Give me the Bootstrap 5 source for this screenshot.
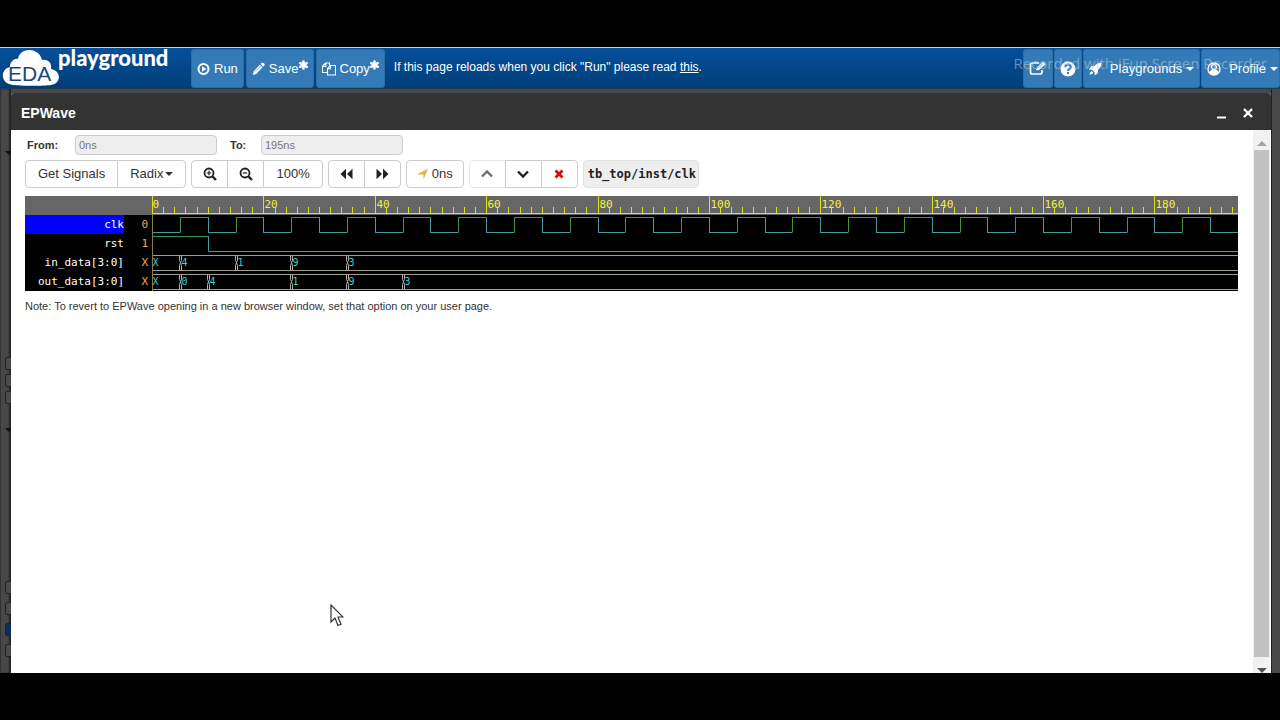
<!DOCTYPE html>
<html lang="en">
<head>
<meta charset="utf-8">
<meta name="viewport" content="width=device-width, initial-scale=1">
<title>EPWave - EDA Playground</title>
<link href="https://cdn.jsdelivr.net/npm/bootstrap@5.3.0/dist/css/bootstrap.min.css" rel="stylesheet">
<style>
body{background:#000;font-family:"Liberation Sans",Arial,sans-serif;font-size:13px;line-height:18px;color:#333}
.screen{height:100vh;min-height:400px;padding:47px 0;overflow:hidden}
.stage{background:#484848;min-height:0}
svg{display:block;flex:none}
.topbar{height:42px;padding:1px 0 0 2px;border-top:1px solid #b9d3ea;border-bottom:1px solid #1c3f5a;background:linear-gradient(#05509b,#003e78);color:#fff;white-space:nowrap;flex:none}
.brand{color:#fff;text-decoration:none;width:189px}
.brand-name{font:900 22px/18px Lato,sans-serif;margin-left:-2px}
.message{font-size:12px;line-height:36px;padding-left:9px}
.btn{--bs-btn-font-size:13px;--bs-btn-line-height:18px;--bs-btn-padding-y:0px;--bs-btn-border-radius:4px;display:inline-flex;align-items:center;justify-content:center;gap:4px}
.nav-btn{--bs-btn-color:#fff;--bs-btn-bg:#337ab7;--bs-btn-border-color:#2e6da4;--bs-btn-hover-bg:#286090;--bs-btn-hover-color:#fff;--bs-btn-padding-x:5px;height:39px;border-radius:3px}
.caret{border:4px solid transparent;border-top-color:currentColor;border-bottom:0}
.watermark{position:absolute;right:13px;top:52px;font:15px/22px "Open Sans",sans-serif;color:rgba(190,205,220,.55);pointer-events:none;z-index:3;white-space:nowrap}
.gutter{width:11px;flex:none;overflow:hidden;padding:62px 0 0 4px;border-left:1px solid #333;box-shadow:inset -2px 0 2px #222}
.gutter input{appearance:none;display:block;width:13px;height:13px;margin:0 0 4px;border:1px solid #222;border-radius:2px;background:#4b4b4b}
.gutter input:checked{background:#0b2f5f}
.gutter .fold{width:0;border:4px solid transparent;border-top-color:#111;border-bottom:0}
.gutter-end{width:9px;flex:none;border-left:1px solid #222}
.dialog-box{min-width:0;margin-top:4px;background:#fff;border-radius:4px 4px 0 0}
.dialog-head{height:37px;padding:2px 14px 0 10px;background:#333;color:#fff;border-radius:4px 4px 0 0;flex:none}
.dialog-head h1{font-size:14px;line-height:18px;font-weight:700}
.head-btn{border:0;background:none;color:#fff;padding:3px;display:flex}
.pane{min-width:0;padding:5px 15px 0 14px}
.range-label{font-size:11px;font-weight:700}
.range-box{width:142px;height:20px;min-height:20px;padding:0 3px;font-size:11px;line-height:18px;border:1px solid #ccc;border-radius:4px;background:#eee;color:#777}
.range-box:disabled{background:#eee}
.tool{--bs-btn-color:#333;--bs-btn-bg:#fff;--bs-btn-border-color:#ccc;--bs-btn-padding-x:12px;--bs-btn-hover-bg:#e6e6e6;--bs-btn-hover-color:#333;--bs-btn-hover-border-color:#adadad;height:28px}
.tool-icon{--bs-btn-padding-x:0px;width:37px;flex:none!important}
.tool:disabled{--bs-btn-disabled-color:#333;--bs-btn-disabled-border-color:#ddd;--bs-btn-disabled-bg:#fff}
.path-name{height:28px;line-height:26px;padding:0 2px 0 4px;background:#eee;border:1px solid #e3e3e3;border-radius:4px;color:#222;font-family:"DejaVu Sans Mono",monospace;font-size:12px;font-weight:700}
.wave{background:#000;color:#fff;margin-top:8px;font-family:"DejaVu Sans Mono",monospace;font-size:11px;line-height:19px;overflow:hidden}
.names{width:127px;flex:none}
.names-head{height:19px;background:#666}
.sig{height:19px}
.sig-name{width:99px;text-align:right}
.sig-value{width:24px;text-align:right;color:#f4a64c}
.chosen{background:#00f}
#plot{height:95px;min-width:0}
#plot text{font-family:"DejaVu Sans Mono",monospace;font-size:11px}
#plot .bus-text{font-size:10px;fill:#3cd0d0}
.note-text{font-size:11px;line-height:16px;margin:7px 0 0}
.scroll{width:18px;flex:none;background:#f1f1f1;padding:0 1px;border-right:1px solid #fff}
.scroll-end{height:16px;flex:none}
.scroll-end i{border:5px solid transparent}
.thumb{background:#c1c1c1}
.pointer{position:absolute;left:330px;top:604px;z-index:4}
</style>
</head>
<body>
<div class="screen d-flex flex-column position-relative">
  <nav class="topbar d-flex align-items-start">
    <a class="brand d-flex" href="#" aria-label="EDA playground">
      <svg width="58" height="37" viewBox="0 0 58 37"><path fill="#fff" d="M11 36C-2 35-2 20 8 18 8 12 13 9 16 10 18-2 37-2 40 11c6-1 10 3 9 9 11 2 10 15 0 16-6 1-31 1-38 0Z"/><text x="6" y="32" font-family="Liberation Sans" font-size="21" fill="#1d4775">EDA</text></svg>
      <span class="brand-name">playground</span>
    </a>
    <div class="d-flex" style="gap:2px">
      <button class="btn nav-btn" type="button"><svg width="13" height="14" viewBox="0 0 13 14"><circle cx="6.500" cy="7" r="5" fill="none" stroke="#fff" stroke-width="2"/><path d="M5 4.300v5.400L9.500 7Z" fill="#fff"/></svg>Run</button>
      <button class="btn nav-btn" type="button"><svg width="13" height="14" viewBox="0 0 13 14"><path fill="#fff" d="M8.500 2 10 .8q1-.5 2 .5t.6 2L11.300 4.800ZM7.700 2.800l2.800 2.800-6.300 6.300L.8 13l.9-3.800Z"/><path d="m3 9.600 5.500-5.500" stroke="#337ab7" stroke-width=".6"/></svg><span class="d-flex">Save<svg width="9" height="10" viewBox="-5 -5 10 10"><path d="M0-4v8M-3.600-2l7.200 4M-3.600 2l7.200-4" stroke="#fff" stroke-width="2.800" stroke-linecap="round"/></svg></span></button>
      <button class="btn nav-btn" type="button"><svg width="14" height="14" viewBox="0 0 14 14" fill="none" stroke="#fff" stroke-width="1.100"><path d="M5.500 10.500h-5V4L3.500 1h4v2.500M.5 4.500h3.300V1M8.500 3.500h5v9.500h-8V6.500ZM8.500 3.500v3.300h-3"/></svg><span class="d-flex">Copy<svg width="9" height="10" viewBox="-5 -5 10 10"><path d="M0-4v8M-3.600-2l7.200 4M-3.600 2l7.200-4" stroke="#fff" stroke-width="2.800" stroke-linecap="round"/></svg></span></button>
    </div>
    <span class="message">If this page reloads when you click "Run" please read <a href="#" class="text-white">this</a>.</span>
    <div class="d-flex ms-auto" style="gap:1px">
      <button class="btn nav-btn" type="button" aria-label="Edit"><svg width="18" height="15" viewBox="0 0 18 15" fill="none" stroke="#fff"><path d="M10 2H3.500Q1.500 2 1.500 4v7q0 2 2 2h7.500q2 0 2-2V9" stroke-width="1.700"/><path d="m7 9.500 1-3L14 .8l2.500 2.400L10 9Z" fill="#fff" stroke="none"/><path d="m8.500 7.500 5.500-5" stroke="#337ab7" stroke-width=".6"/></svg></button>
      <button class="btn nav-btn" type="button" aria-label="Help"><svg width="16" height="16" viewBox="0 0 16 16"><circle cx="8" cy="8" r="7.500" fill="#fff"/><path d="M5.200 6q.4-2.400 2.800-2.400T10.800 6C10.800 8 8 7.800 8 10M8 11v2" fill="none" stroke="#337ab7" stroke-width="2"/></svg></button>
      <button class="btn nav-btn" type="button"><svg width="13" height="14" viewBox="0 0 13 14"><path fill="#fff" d="M12.500.5Q8 .8 5.500 4L2 4.300 0 7.500l3 .3 2.500 2.500.3 3.200 3-2.200.3-3.500Q12.500 5 12.500.5ZM2.500 9Q.8 10 .5 12.800 3.500 12.500 4.300 10.800Z"/></svg><span class="ps-1">Playgrounds</span><span class="caret"></span></button>
      <button class="btn nav-btn" type="button" style="padding-right:1px"><svg width="14" height="14" viewBox="0 0 14 14"><circle cx="7" cy="7" r="6" fill="none" stroke="#fff" stroke-width="1.400"/><circle cx="7" cy="5" r="2.400" fill="none" stroke="#fff" stroke-width="1.300"/><path d="M2.500 10.500Q3 8 5 7.500 7 9 9 7.500q2 .5 2.500 3Q7 15 2.500 10.500Z" fill="#fff"/></svg><span class="ps-1">Profile</span><span class="caret"></span></button>
    </div>
  </nav>
  <span class="watermark">Recorded with iFun Screen Recorder</span>

  <div class="stage d-flex flex-fill">
    <div class="gutter" aria-hidden="true">
      <div class="fold"></div>
      <div style="height:202px"></div>
      <input type="checkbox" aria-label="Option 1"><input type="checkbox" aria-label="Option 2"><input type="checkbox" aria-label="Option 3">
      <div class="fold mt-4"></div>
      <div style="height:149px"></div>
      <input type="checkbox" class="mb-2" aria-label="Option 4"><input type="checkbox" class="mb-2" aria-label="Option 5"><input type="checkbox" class="mb-2" checked aria-label="Option 6"><input type="checkbox" aria-label="Option 7">
    </div>
    <section class="dialog-box d-flex flex-column flex-fill" aria-label="EPWave">
      <header class="dialog-head d-flex align-items-center">
        <h1 class="m-0 me-auto">EPWave</h1>
        <button class="head-btn me-2" type="button" aria-label="Minimize"><svg width="12" height="12"><path d="M1 10.500h9" stroke="#fff" stroke-width="2"/></svg></button>
        <button class="head-btn" type="button" aria-label="Close"><svg width="12" height="12"><path d="m2 2 8 8m0-8-8 8" stroke="#fff" stroke-width="2.400"/></svg></button>
      </header>
      <div class="d-flex flex-fill" style="min-height:0">
        <div class="pane flex-fill">
          <form class="d-flex align-items-center">
            <label class="range-label" for="from" style="width:50px;text-indent:2px">From:</label>
            <input class="range-box" id="from" value="0ns" disabled>
            <label class="range-label" for="to" style="width:44px;text-indent:13px">To:</label>
            <input class="range-box" id="to" value="195ns" disabled>
          </form>
          <div class="d-flex flex-wrap" style="gap:5px;margin-top:5px">
            <div class="btn-group">
              <button class="btn tool" type="button">Get Signals</button>
              <button class="btn tool" type="button" style="gap:2px">Radix<span class="caret"></span></button>
            </div>
            <div class="btn-group">
              <button class="btn tool tool-icon" type="button" aria-label="Zoom in"><svg width="14" height="14" fill="none" stroke="#222"><circle cx="6" cy="6" r="4.500" stroke-width="1.800"/><path d="m9.500 9.500 3.500 3.500" stroke-width="2.400"/><path d="M6 3.800v4.400M3.800 6h4.400" stroke-width="1.200"/></svg></button>
              <button class="btn tool tool-icon" type="button" aria-label="Zoom out"><svg width="14" height="14" fill="none" stroke="#222"><circle cx="6" cy="6" r="4.500" stroke-width="1.800"/><path d="m9.500 9.500 3.500 3.500" stroke-width="2.400"/><path d="M3.800 6h4.400" stroke-width="1.200"/></svg></button>
              <button class="btn tool" type="button">100%</button>
            </div>
            <div class="btn-group">
              <button class="btn tool tool-icon" type="button" aria-label="Back"><svg width="13" height="12" fill="#222"><path d="M6 .8v10.400L.5 6ZM12.500.8v10.400L7 6Z"/></svg></button>
              <button class="btn tool tool-icon" type="button" aria-label="Forward"><svg width="13" height="12" fill="#222"><path d="M.5.8v10.400L6 6ZM7 .8v10.400L12.500 6Z"/></svg></button>
            </div>
            <button class="btn tool" type="button" style="--bs-btn-padding-x:10px"><svg width="11" height="12"><path d="M11 .5 6.500 11.500V6.500H0Z" fill="#f0ad3e"/></svg>0ns</button>
            <div class="btn-group">
              <button class="btn tool tool-icon" type="button" disabled aria-label="Move up"><svg width="14" height="12" fill="none"><path d="m2 8.500 5-5 5 5" stroke="#222" stroke-width="2.400"/></svg></button>
              <button class="btn tool tool-icon" type="button" aria-label="Move down"><svg width="14" height="12" fill="none"><path d="m2 3.500 5 5 5-5" stroke="#222" stroke-width="2.400"/></svg></button>
              <button class="btn tool tool-icon" type="button" aria-label="Remove"><svg width="12" height="12"><path d="m2.500 2.500 7 7m0-7-7 7" stroke="#d80b0b" stroke-width="2.800"/></svg></button>
            </div>
            <span class="path-name">tb_top/inst/clk</span>
          </div>
          <div class="wave d-flex">
            <div class="names">
              <div class="names-head"></div>
              <div class="sig d-flex"><span class="sig-name chosen">clk</span><span class="sig-value">0</span></div>
              <div class="sig d-flex"><span class="sig-name">rst</span><span class="sig-value">1</span></div>
              <div class="sig d-flex"><span class="sig-name">in_data[3:0]</span><span class="sig-value">X</span></div>
              <div class="sig d-flex"><span class="sig-name">out_data[3:0]</span><span class="sig-value">X</span></div>
            </div>
            <div id="plot" class="flex-fill"></div>
          </div>
          <p class="note-text">Note: To revert to EPWave opening in a new browser window, set that option on your user page.</p>
        </div>
        <div class="scroll d-flex flex-column" style="padding-top:4px" aria-hidden="true">
          <div class="scroll-end d-flex justify-content-center"><i style="border-bottom-color:#a3a3a3;border-top:0;margin:4px 0"></i></div>
          <div class="thumb flex-fill"></div>
          <div class="scroll-end d-flex justify-content-center"><i style="border-top-color:#505050;border-bottom:0;margin:11px 0 0"></i></div>
        </div>
      </div>
    </section>
    <div class="gutter-end"></div>
  </div>
  <svg class="pointer" width="14" height="23" viewBox="0 0 14 23"><path d="M1 1v17l4-4 3 7.500 3-1.300L8 13h5Z" fill="#fff" stroke="#333" stroke-width="1.200"/></svg>
</div>
<script src="https://cdn.jsdelivr.net/npm/bootstrap@5.3.0/dist/js/bootstrap.bundle.min.js"></script>
<script>
const END = 195, ROW = 19;
const buses = [
  [[0,'X'],[5,'4'],[15,'1'],[25,'9'],[35,'3']],
  [[0,'X'],[5,'0'],[10,'4'],[25,'1'],[35,'9'],[45,'3']]
];
function draw() {
  const plot = document.getElementById('plot');
  const w = plot.clientWidth;
  const at = t => Math.round(t * w / END) + 0.5;
  let s = `<rect width="${w}" height="19" fill="#666"/>`;
  let major = '', minor = '', labels = '';
  for (let t = 0; t < END; t += 2) {
    if (t % 20 === 0) {
      major += `M${at(t)} 0V18`;
      labels += `<text x="${at(t) + (t ? 1 : 0)}" y="12" fill="#f1f13c">${t}</text>`;
    } else minor += `M${at(t)} 11V18`;
  }
  s += `<path d="${major}${minor}M0 17.5H${w}" stroke="#dede20" fill="none"/>${labels}`;
  // clock: low for 5 ns, high for 5 ns
  let high = '', low = '';
  for (let t = 0; t < END; t += 10) {
    low += `M${at(t)} 36.500H${at(t + 5)}`;
    if (t + 5 < END) {
      high += `M${at(t + 5)} 36V21.500H${at(t + 10)}`;
      low += `M${at(t + 10)} 21V37`;
    }
  }
  high += `M${at(0)} 40.500H${at(10)}`;
  low += `M${at(10)} 40V55.500H${w}`;
  s += `<path d="${low}" stroke="#459c9c" fill="none"/><path d="${high}" stroke="#3f9550" fill="none"/>`;
  buses.forEach((bus, i) => {
    const top = ROW * (i + 3) + 2.5, bot = top + 15;
    s += `<path d="M0 ${top}H${w}M0 ${bot}H${w}" stroke="#a09c94" fill="none"/>`;
    bus.forEach(([t, v]) => {
      const x = at(t);
      if (t) s += `<path d="M${x-1} ${top}V${top+5}L${x} ${top+7}L${x-1} ${bot-5}V${bot}M${x+1} ${top}V${top+5}L${x} ${top+7}L${x+1} ${bot-5}V${bot}" stroke="#b5b1a8" fill="none"/>`;
      s += `<text class="bus-text" x="${x + (t ? 1 : 0)}" y="${top + 10}">${v}</text>`;
    });
  });
  s += `<path d="M.5 18V95" stroke="#8a7a48"/>`;
  plot.innerHTML = `<svg width="${w}" height="95">${s}</svg>`;
}
draw();
addEventListener('resize', draw);
</script>
</body>
</html>
